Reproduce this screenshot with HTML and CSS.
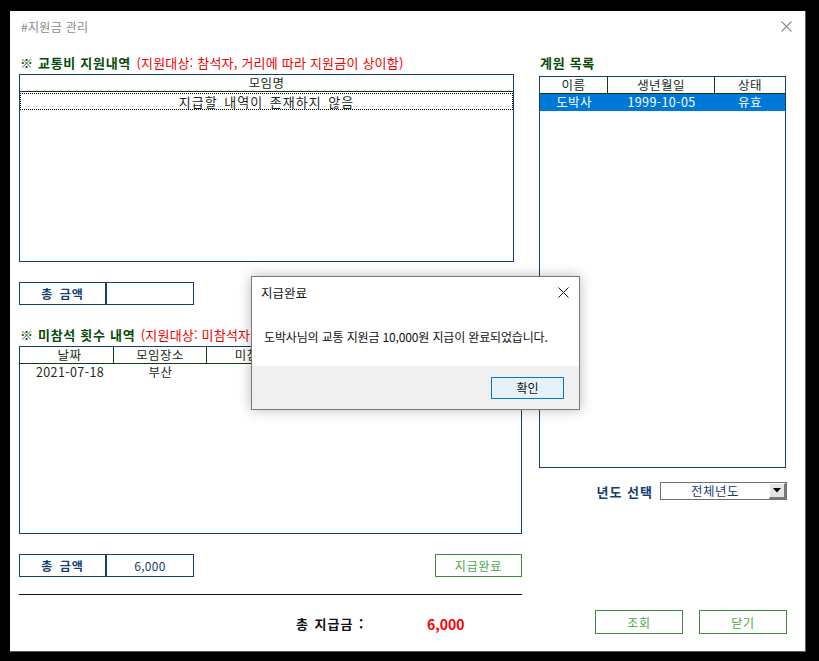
FILE: index.html
```html
<!DOCTYPE html>
<html lang="ko">
<head>
    <meta charset="UTF-8">
    <title>#지원금 관리</title>
    <link rel="stylesheet" href="styles.css">
</head>
<body>
    <div class="window">
        <div class="titlebar">
            <span class="title">#지원금 관리</span>
            <span class="win-close">
                <svg width="11" height="11" viewBox="0 0 11 11"><path d="M0.5 0.5 L10.5 10.5 M10.5 0.5 L0.5 10.5" stroke="#8a8a8a" stroke-width="1.1" fill="none"/></svg>
            </span>
        </div>

        <div class="content">
            <!-- left side -->
            <div class="col-left">
                <div class="sec-title">
                    <b>※ 교통비 지원내역</b>
                    <span class="note">(지원대상: 참석자, 거리에 따라 지원금이 상이함)</span>
                </div>
                <div class="list list-1">
                    <div class="list-head">
                        <div class="cell grow">모임명</div>
                    </div>
                    <div class="list-row focused">
                        <div class="cell grow">지급할 내역이 존재하지 않음</div>
                    </div>
                </div>

                <div class="sum-box first">
                    <div class="sum-label">총 금액</div>
                    <div class="sum-value"></div>
                </div>

                <div class="sec-title second">
                    <b>※ 미참석 횟수 내역</b>
                    <span class="note">(지원대상: 미참석자, 횟수에 따라 지원금이 상이함)</span>
                </div>
                <div class="list list-2">
                    <div class="list-head">
                        <div class="cell w-date">날짜</div>
                        <div class="cell w-place">모임장소</div>
                        <div class="cell w-count">미참석 횟수</div>
                        <div class="cell grow">금액</div>
                    </div>
                    <div class="list-row">
                        <div class="cell w-date">2021-07-18</div>
                        <div class="cell w-place">부산</div>
                        <div class="cell w-count">1</div>
                        <div class="cell grow">6,000</div>
                    </div>
                </div>

                <div class="sum-row">
                    <div class="sum-box">
                        <div class="sum-label">총 금액</div>
                        <div class="sum-value">6,000</div>
                    </div>
                    <button class="btn">지급완료</button>
                </div>

                <div class="divider"></div>

                <div class="pay-row">
                    <span class="pay-label">총 지급금 :</span>
                    <span class="pay-value">6,000</span>
                </div>
            </div>

            <!-- right side -->
            <div class="col-right">
                <div class="sec-title"><b>계원 목록</b></div>
                <div class="list list-members">
                    <div class="list-head">
                        <div class="cell w-name">이름</div>
                        <div class="cell w-birth">생년월일</div>
                        <div class="cell grow">상태</div>
                    </div>
                    <div class="list-row selected">
                        <div class="cell w-name">도박사</div>
                        <div class="cell w-birth">1999-10-05</div>
                        <div class="cell grow">유효</div>
                    </div>
                </div>

                <div class="year-row">
                    <span class="year-label">년도 선택</span>
                    <div class="combo">
                        <span class="combo-text">전체년도</span>
                        <span class="combo-btn">
                            <svg width="8" height="5" viewBox="0 0 8 5"><path d="M0 0 H8 L4 4.5 Z" fill="#000"/></svg>
                        </span>
                    </div>
                </div>

                <div class="btn-row">
                    <button class="btn">조회</button>
                    <button class="btn">닫기</button>
                </div>
            </div>
        </div>

        <!-- message box -->
        <div class="msgbox">
            <div class="msg-title">
                <span>지급완료</span>
                <svg width="11" height="11" viewBox="0 0 11 11"><path d="M0.5 0.5 L10.5 10.5 M10.5 0.5 L0.5 10.5" stroke="#111" stroke-width="1" fill="none"/></svg>
            </div>
            <div class="msg-body">도박사님의 교통 지원금 10,000원 지급이 완료되었습니다.</div>
            <div class="msg-foot">
                <button class="msg-btn">확인</button>
            </div>
        </div>
    </div>
</body>
</html>
```

FILE: styles.css
```css
* {
    margin: 0;
    padding: 0;
    box-sizing: border-box;
}

body {
    background: #000;
    font-family: "Noto Sans CJK KR", "Noto Sans", sans-serif;
    font-size: 12px;
    color: #1b1b1b;
}

.window {
    position: relative;
    margin: 11px 0 0 10px;
    width: 796px;
    height: 641px;
    background: #fff;
    border-right: 1px solid #5a5a5a;
    border-bottom: 1px solid #5a5a5a;
}

.titlebar {
    height: 30px;
    display: flex;
    align-items: center;
    justify-content: space-between;
    padding: 0 13px 0 11px;
}

.title {
    color: #8c8c8c;
    font-size: 12px;
    letter-spacing: 0.3px;
}

.win-close {
    display: flex;
}

.content {
    display: flex;
    padding-left: 9px;
    gap: 17px;
}

.col-left {
    width: 503px;
}

.col-right {
    width: 247px;
}

.sec-title {
    height: 16px;
    margin-top: 14px;
    line-height: 16px;
    white-space: nowrap;
    padding-left: 1px;
}

.sec-title b {
    color: #0a4a0a;
    font-size: 13px;
    font-weight: 700;
    letter-spacing: 0.7px;
}

.sec-title .note {
    color: #f00000;
    font-size: 13px;
    letter-spacing: 0.2px;
    margin-left: 2px;
}

.sec-title.second {
    margin-top: 22px;
}

.list {
    margin-top: 3px;
    height: 188px;
    border: 1px solid #163f6e;
}

.list-1 {
    width: 495px;
}

.list-head {
    display: flex;
    height: 17px;
    border-bottom: 1px solid #0d400d;
}

.list-head .cell {
    border-right: 1px solid #0d400d;
}

.list-head .cell:last-child {
    border-right: none;
}

.list-row {
    display: flex;
    height: 17px;
}

.cell {
    text-align: center;
    line-height: 16px;
    white-space: nowrap;
    color: #1c2a1c;
    font-size: 12.5px;
    letter-spacing: 0.4px;
}

.grow {
    flex: 1;
}

.focused {
    border: 1px dotted #000;
    margin: 1px 0 0;
}

.focused .cell {
    line-height: 15px;
    font-size: 13px;
    letter-spacing: 1px;
    word-spacing: 2px;
}

.w-date { width: 94px; padding-left: 6px; }
.w-place { width: 93px; }
.w-count { width: 120px; }

.list-members {
    margin-top: 5px;
    height: 392px;
}

.w-name { width: 68px; }
.w-birth { width: 107px; }

.selected {
    background: #0078d7;
}

.selected .cell {
    color: #fff;
}

.sum-box {
    display: flex;
    width: 175px;
    height: 23px;
    border: 1px solid #163f6e;
}

.sum-box.first {
    margin-top: 20px;
}

.sum-label {
    width: 87px;
    border-right: 2px solid #163f6e;
    text-align: center;
    line-height: 21px;
    font-weight: 700;
    color: #163f6e;
    letter-spacing: 1px;
    word-spacing: 2px;
}

.sum-value {
    flex: 1;
    text-align: center;
    line-height: 21px;
    color: #163f6e;
    letter-spacing: 0.3px;
}

.sum-row {
    margin-top: 20px;
    display: flex;
    justify-content: space-between;
}

.btn {
    width: 88px;
    height: 24px;
    border: 1px solid #3a8c3a;
    background: #fff;
    color: #4aa84a;
    font-family: inherit;
    font-size: 12px;
    letter-spacing: 0.8px;
}

.sum-row .btn {
    height: 23px;
    width: 87px;
}

.divider {
    margin-top: 17px;
    height: 1px;
    background: #111;
}

.pay-row {
    margin-top: 19px;
    height: 20px;
    line-height: 20px;
    padding-left: 277px;
    display: flex;
    white-space: nowrap;
}

.pay-label {
    font-size: 13px;
    font-weight: 700;
    color: #111;
    width: 131px;
    letter-spacing: 1px;
    word-spacing: 1px;
}

.pay-value {
    font-size: 14px;
    font-weight: 700;
    color: #f00;
}

.year-row {
    margin-top: 14px;
    height: 18px;
    display: flex;
    justify-content: flex-end;
    align-items: center;
}

.year-label {
    font-size: 13px;
    font-weight: 700;
    color: #163f6e;
    margin-right: 7px;
    letter-spacing: 1px;
}

.combo {
    width: 127px;
    height: 18px;
    border: 1px solid #707070;
    display: flex;
    margin-right: -1px;
}

.combo-text {
    flex: 1;
    text-align: center;
    line-height: 16px;
    color: #163f6e;
    font-size: 12.5px;
    letter-spacing: 0.5px;
}

.combo-btn {
    width: 17px;
    height: 16px;
    background: #e4e4e4;
    border-left: 1px solid #fff;
    border-top: 1px solid #fff;
    border-right: 2px solid #7a7a7a;
    border-bottom: 2px solid #7a7a7a;
    display: flex;
    align-items: center;
    justify-content: center;
}

.btn-row {
    margin-top: 110px;
    display: flex;
    justify-content: flex-end;
    gap: 16px;
    margin-right: -1px;
}

/* message box over the form */
.msgbox {
    position: absolute;
    left: 241px;
    top: 265px;
    width: 329px;
    height: 134px;
    background: #fff;
    border: 1px solid #7a7a7a;
    box-shadow: 0 0 12px rgba(0, 0, 0, 0.28);
    display: flex;
    flex-direction: column;
    font-family: "Noto Sans CJK KR", sans-serif;
}

.msg-title {
    height: 31px;
    display: flex;
    align-items: center;
    justify-content: space-between;
    padding: 0 10px 0 9px;
    color: #111;
    font-size: 12.5px;
}

.msg-body {
    height: 58px;
    padding: 20px 0 0 12px;
    font-size: 12px;
    letter-spacing: -0.15px;
    color: #111;
    white-space: nowrap;
}

.msg-foot {
    flex: 1;
    background: #f0f0f0;
    display: flex;
    justify-content: flex-end;
    align-items: center;
    padding-right: 15px;
}

.msg-btn {
    width: 73px;
    height: 22px;
    background: #e5f1fb;
    border: 1px solid #0078d7;
    font-family: inherit;
    font-size: 12px;
    color: #111;
}
```
